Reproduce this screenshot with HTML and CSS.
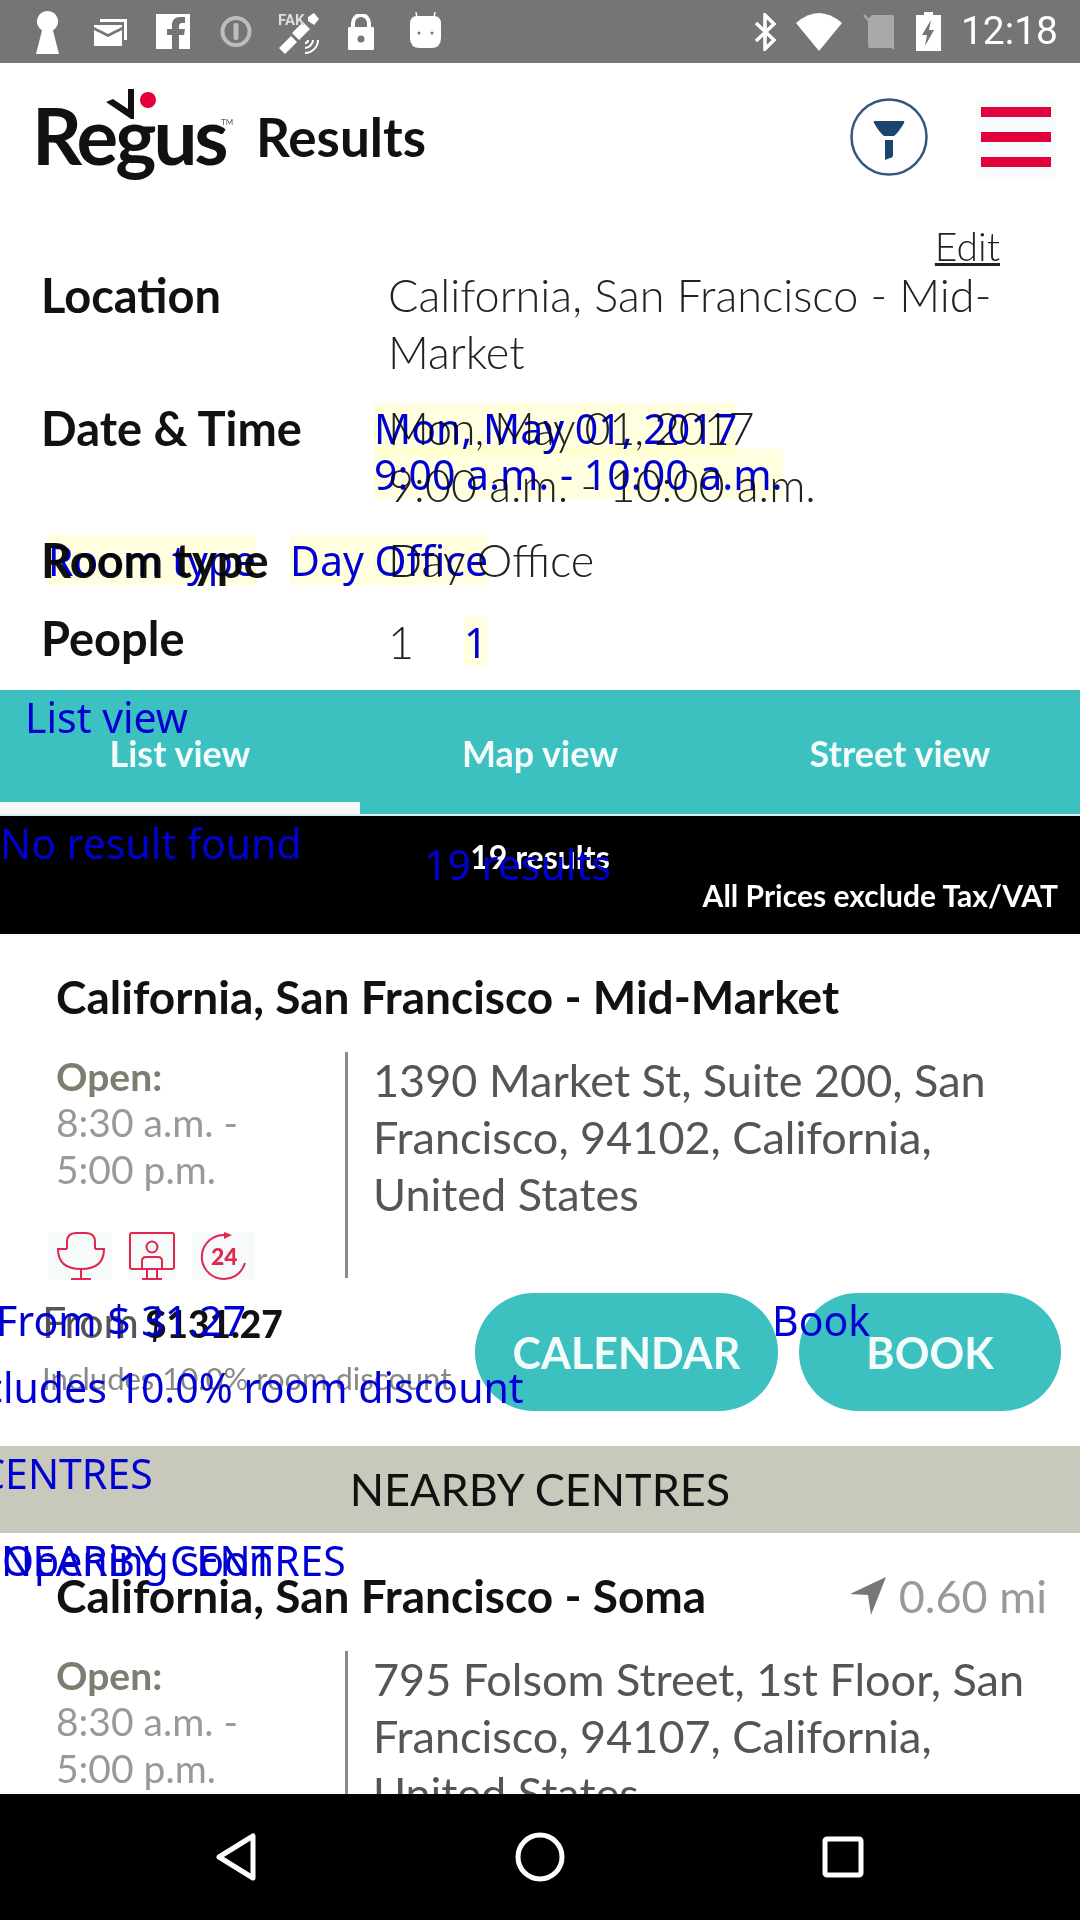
FILE: index.html
```html
<!DOCTYPE HTML>
<html>
<head>
<meta http-equiv="Content-Type" content="text/html; charset=utf-8">
<title>Results</title>
<link rel="stylesheet" href="styles.css">
</head>

<body>
<div class="screen">
	<div class="status">
		<svg class="s-key" viewBox="0 0 23 43"><path d="M11.500 0a10.500 10.500 0 0 1 5.500 19.500L23 43H0l6-23.500A10.500 10.500 0 0 1 11.500 0z" fill="#fff"/></svg>
		<svg class="s-mail" viewBox="0 0 33 27"><path d="M6 0h27v21h-3V3H6z" fill="#fff"/><path d="M0 6h28v2L14 15 0 8zM0 11l14 7 14-7v16H0z" fill="#fff"/></svg>
		<svg class="s-fb" viewBox="0 0 34 35"><path d="M0 0h34v35H23V21h5l1-6h-6v-3c0-2 1-3 3-3h3V3h-5c-5 0-8 3-8 8v4h-5v6h5v14H0z" fill="#fff"/></svg>
		<svg class="s-info" viewBox="0 0 32 33"><circle cx="16" cy="16.500" r="13.500" fill="none" stroke="#bdbdbd" stroke-width="4"/><rect x="13.500" y="8" width="5" height="17" rx="2" fill="#bdbdbd"/></svg>
		<svg class="s-sat" viewBox="0 0 43 43"><path d="M1 36 13 24l6 6-12 12zM30 5l6-4 5 6-5 6-6-4zM14 21 25 10l7 7-11 11z" fill="#fff"/><path d="M27 41c7 0 13-6 13-13M27 36c4 0 8-4 8-8M27 31c2 0 3-1 3-3" fill="none" stroke="#fff" stroke-width="2"/><text x="0" y="13" class="s-fake">FAK</text></svg>
		<svg class="s-lock" viewBox="0 0 26 36"><path d="M5 14V9a8 8 0 0 1 16 0v5" fill="none" stroke="#fff" stroke-width="4"/><path d="M1 13h24q1 0 1 1v21q0 1-1 1H1q-1 0-1-1V14q0-1 1-1z" fill="#fff"/><circle cx="13" cy="25" r="3.500" fill="#757575"/></svg>
		<svg class="s-droid" viewBox="0 0 31 37"><path d="M7 7 6 1M24 7l1-6" stroke="#fff" stroke-width="1.500"/><path d="M7 5h17q7 0 7 8v14q0 10-10 10H10Q0 37 0 27V13q0-8 7-8z" fill="#fff"/><circle cx="9" cy="22" r="1.500" fill="#757575"/><circle cx="22" cy="22" r="1.500" fill="#757575"/></svg>
		<div class="status-gap"></div>
		<svg class="s-bt" viewBox="0 0 23 38"><path d="M2 10 20 27 11 36V2l9 9L2 28" fill="none" stroke="#fff" stroke-width="3.500"/></svg>
		<svg class="s-wifi" viewBox="0 0 46 38"><path d="M0 10Q23-10 46 10L23 38z" fill="#fff"/></svg>
		<svg class="s-sim" viewBox="0 0 34 37"><path d="M10 2h20q2 0 2 2v31H8q-2 0-2-2V6z" fill="#a9a9a9"/><path d="M2 2 32 36" stroke="#a9a9a9" stroke-width="2.500"/></svg>
		<svg class="s-bat" viewBox="0 0 25 39"><path d="M8 0h9v3h8v36H0V3h8z" fill="#fff"/><path d="M15 8 6 23h5l-2 11 9-16h-5z" fill="#757575"/></svg>
		<span class="time">12:18</span>
	</div>

	<div class="content">
		<div class="head">
			<div class="logo">
				<svg class="logo-mark" viewBox="0 0 50 32"><path d="M22 0h6v30h-3L0 13l7-3 15 10z" fill="#111"/><circle cx="42" cy="11" r="8" fill="#e4003a"/></svg>
				<span class="logo-text">Regus</span><span class="logo-tm">TM</span>
			</div>
			<div class="head-title">Results</div>
			<svg class="filter" viewBox="0 0 78 80"><circle cx="39" cy="40" r="37.500" fill="#fff" stroke="#34567c" stroke-width="2.500"/><path d="M25 24h28q2 0 1 2-5 9-10 13H34q-5-4-10-13-1-2 1-2zM35 43h8v15q0 3-3 3l-5 2z" fill="#1b4470"/></svg>
			<div class="menu"><i></i><i></i><i></i></div>
		</div>

		<div class="edit-row"><a class="edit">Edit</a></div>

		<div class="detail d-loc">
			<div class="d-label">Location</div>
			<div class="d-value">California, San Francisco - Mid-<br>Market</div>
		</div>
		<div class="detail d-date">
			<div class="d-label">Date &amp; Time</div>
			<div class="d-value"><span class="d-tight">Mon, May 01, 2017</span><br>9:00 a.m. - 10:00 a.m.</div>
		</div>
		<div class="detail d-room">
			<div class="d-label">Room type</div>
			<div class="d-value">Day Office</div>
		</div>
		<div class="detail d-people">
			<div class="d-label">People</div>
			<div class="d-value d-num">1</div>
		</div>

		<div class="tabs">
			<div class="tab tab-on">List view</div>
			<div class="tab">Map view</div>
			<div class="tab">Street view</div>
		</div>

		<div class="summary">
			<div class="sum-count">19 results</div>
			<div class="sum-tax">All Prices exclude Tax/VAT</div>
		</div>

		<div class="card">
			<div class="card-top"><div class="card-title">California, San Francisco - Mid-Market</div></div>
			<div class="card-body">
				<div class="hours">
					<div class="open">Open:</div>
					<div class="times">8:30 a.m. -<br>5:00 p.m.</div>
					<div class="amen">
						<svg class="am am-chair" viewBox="0 0 64 48"><g fill="none" stroke="#e4254f" stroke-width="2"><path d="M19 17V10Q19 1 28 1H38Q47 1 47 10V17"/><path d="M19 17H10Q10 37 33 37Q56 37 56 17H47M33 37V47M23 47H43"/></g></svg>
						<svg class="am am-user" viewBox="0 0 48 48"><g fill="none" stroke="#e4254f" stroke-width="2"><rect x="2" y="1" width="44" height="36" rx="2"/><circle cx="24" cy="15" r="5.500"/><path d="M14 37V29q0-4 4-4h12q4 0 4 4v8M19 37v9M29 37v9M14 47h20"/></g></svg>
						<svg class="am am-24" viewBox="0 0 63 48"><path d="M33 3A22 22 0 1 0 53 31" fill="none" stroke="#e4254f" stroke-width="2"/><path d="M32 0l8 3-8 4z" fill="#e4254f"/><text x="19" y="33" class="am-text">24</text></svg>
					</div>
				</div>
				<div class="addr">1390 Market St, Suite 200, San Francisco, 94102, California, United States</div>
			</div>
			<div class="price-row">
				<div class="price">
					<div class="price-line"><span class="from">From</span> <b class="amount">$131.27</b></div>
					<div class="includes">Includes 10.0% room discount</div>
				</div>
				<a class="btn btn-cal">CALENDAR</a>
				<a class="btn btn-book">BOOK</a>
			</div>
		</div>

		<div class="nearby">NEARBY CENTRES</div>

		<div class="card">
			<div class="card-top">
				<div class="card-title">California, San Francisco - Soma</div>
				<div class="dist">
					<svg class="dist-arrow" viewBox="0 0 36 38"><path d="M36 0 21 38l-3-20L0 17z" fill="#777"/></svg>
					<span>0.60 mi</span>
				</div>
			</div>
			<div class="card-body">
				<div class="hours">
					<div class="open">Open:</div>
					<div class="times">8:30 a.m. -<br>5:00 p.m.</div>
				</div>
				<div class="addr">795 Folsom Street, 1st Floor, San Francisco, 94107, California, United States</div>
			</div>
		</div>

		<!-- second layer of labels sitting on top of the page -->
		<div class="over o-list">List view</div>
		<div class="over o-none">No result found</div>
		<div class="over o-count">19 results</div>
		<div class="over o-date hl">Mon, May 01, 2017</div>
		<div class="over o-time hl">9:00 a.m. - 10:00 a.m.</div>
		<div class="over o-room hl">Room type</div>
		<div class="over o-day hl">Day Office</div>
		<div class="over o-one hl">1</div>
		<div class="over o-from">From $ 31.27</div>
		<div class="over o-book">Book</div>
		<div class="over o-disc">Includes 10.0% room discount</div>
		<div class="over o-cent">NEARBY CENTRES</div>
		<div class="over o-near">NEARBY CENTRES</div>
		<div class="over o-soon">Opening soon</div>
	</div>

	<div class="nav">
		<svg class="nav-ic" viewBox="0 0 60 60"><path d="M46 9v42L12 30z" fill="none" stroke="#fff" stroke-width="5" stroke-linejoin="round"/></svg>
		<svg class="nav-ic" viewBox="0 0 60 60"><circle cx="30" cy="30" r="22" fill="none" stroke="#fff" stroke-width="5"/></svg>
		<svg class="nav-ic" viewBox="0 0 60 60"><rect x="12" y="12" width="36" height="36" rx="2" fill="none" stroke="#fff" stroke-width="5"/></svg>
	</div>
</div>
</body>
</html>
```

FILE: styles.css
```css
* {box-sizing: border-box;}
html, body {margin: 0; padding: 0; background: #fff;}
body {font-family: Lato, "Noto Sans", sans-serif; color: #111;}

.screen {width: 1080px; height: 1920px; display: flex; flex-direction: column; overflow: hidden;}

/* status bar */
.status {height: 63px; flex: none; background: #757575; display: flex; align-items: center; padding-left: 36px;}
.status svg {flex: none; display: block;}
.s-key {width: 23px; height: 43px; margin-right: 35px; margin-top: 2px;}
.s-mail {width: 33px; height: 27px; margin-right: 29px; margin-top: 2px;}
.s-fb {width: 34px; height: 35px; margin-right: 30px;}
.s-info {width: 32px; height: 33px; margin-right: 26px;}
.s-sat {width: 43px; height: 43px; margin-right: 27px; margin-top: 4px;}
.s-lock {width: 26px; height: 36px; margin-right: 36px;}
.s-droid {width: 31px; height: 37px; margin-top: -4px;}
.s-fake {font: bold 15px Roboto, sans-serif; fill: #ddd;}
.status-gap {flex: 1;}
.s-bt {width: 23px; height: 38px; margin-right: 19px;}
.s-wifi {width: 46px; height: 38px; margin-right: 20px;}
.s-sim {width: 34px; height: 37px; margin-right: 20px;}
.s-bat {width: 25px; height: 39px; margin-right: 20px;}
.time {font: 400 39px Roboto, sans-serif; color: #fff; margin-right: 22px; line-height: 63px;}

.content {flex: 1; min-height: 0; overflow: hidden; position: relative; background: #fff;}

/* head */
.head {height: 147px; display: flex; align-items: center; padding-left: 36px;}
.logo {width: 220px; height: 100px; position: relative; flex: none;}
.logo-mark {position: absolute; left: 70px; top: 2px; width: 50px; height: 32px;}
.logo-text {position: absolute; left: -4px; top: 8px; font-size: 78px; font-weight: 700; line-height: 80px; letter-spacing: -3px; color: #111;}
.logo-tm {position: absolute; left: 185px; top: 30px; font-size: 8px; color: #555;}
.head-title {font-size: 53px; font-weight: 700; flex: 1;}
.filter {width: 78px; height: 80px; margin-right: 48px; flex: none;}
.menu {width: 80px; height: 80px; margin-right: 24px; flex: none; background: #f7fbfb; display: flex; flex-direction: column; justify-content: center; gap: 15px; padding: 0 5px;}
.menu i {display: block; height: 10px; background: #e4003a;}

/* details */
.edit-row {height: 57px; padding: 16px 80px 0 0; text-align: right;}
.edit {font-size: 39px; font-weight: 300; line-height: 40px; text-decoration: underline; color: #222;}
.detail {display: flex; padding-left: 41px;}
.d-label {width: 347px; font-size: 47px; font-weight: 700; line-height: 57px; flex: none;}
.d-value {font-size: 45px; font-weight: 300; line-height: 57px; color: #222;}
.d-tight {letter-spacing: -1.200px;}
.d-loc {height: 133px;}
.d-date {height: 132px;}
.d-room {height: 78px;}
.d-people {height: 80px;}
.d-num {padding-top: 4px;}

/* tabs */
.tabs {display: flex; height: 126px; background: #3cc0c0; border-bottom: 2px solid #d9efef;}
.tab {flex: 1; text-align: center; font-size: 36px; font-weight: 700; color: #f4fbfb; padding-top: 43px; line-height: 40px;}
.tab-on {border-bottom: 12px solid #f6f8f8;}

.summary {height: 118px; background: #000; color: #fff; padding: 24px 22px 0 0; font-weight: 700;}
.sum-count {text-align: center; font-size: 32px; line-height: 34px; padding-left: 22px;}
.sum-tax {text-align: right; font-size: 30px; line-height: 34px; margin-top: 4px;}

/* cards */
.card {padding-top: 38px;}
.card-top {display: flex; justify-content: space-between; padding: 0 33px 0 56px; height: 50px;}
.card-title {font-size: 46px; font-weight: 700; line-height: 50px; color: #111;}
.dist {display: flex; align-items: center; font-size: 45px; color: #999; gap: 13px;}
.dist-arrow {width: 36px; height: 38px;}
.card-body {display: flex; margin: 30px 0 0 56px; height: 226px;}
.hours {flex: none; border-right: 3px solid #8a8a8a; width: 292px;}
.open {font-size: 39px; font-weight: 700; line-height: 46px; color: #7d7d70; margin-top: 1px;}
.times {font-size: 39px; line-height: 47px; color: #999;}
.amen {display: flex; margin: 39px 0 0 -8px; gap: 16px;}
.am {height: 48px; flex: none; background: #f6fafa;}
.am-chair {width: 64px;}
.am-user {width: 48px;}
.am-24 {width: 63px;}
.am-text {font: 900 23px Lato, sans-serif; fill: #e4254f;}
.addr {font-size: 45px; line-height: 57px; color: #555; padding-left: 25px; width: 700px;}

.price-row {display: flex; margin-top: 15px; height: 118px; padding-right: 19px;}
.price {flex: 1; padding-left: 42px;}
.price-line {line-height: 46px; height: 56px; padding-top: 6px; white-space: nowrap;}
.from {font-size: 43px; color: #555;}
.amount {font-size: 37px; font-weight: 900; color: #111; margin-left: 2px;}
.includes {font-size: 31px; color: #888; line-height: 30px; margin-top: 14px; white-space: nowrap;}
.btn {height: 118px; border-radius: 59px; background: #3cc0c0; color: #f4fbfb; font-size: 43px; font-weight: 700; display: flex; align-items: center; justify-content: center;}
.btn-cal {width: 303px; margin-right: 21px;}
.btn-book {width: 262px;}

.nearby {margin-top: 35px; height: 87px; background: #c9c8bc; font-size: 45px; line-height: 87px; text-align: center; color: #111;}

/* overlaid labels */
.over {position: absolute; font-family: "Noto Sans", sans-serif; font-size: 41px; line-height: 50px; color: #0000d2; white-space: nowrap;}
.hl {background: #ffffe0; mix-blend-mode: multiply;}
.o-list {left: 25px; top: 629px;}
.o-none {left: 0; top: 755px;}
.o-count {left: 424px; top: 776px;}
.o-date {left: 374px; top: 340px;}
.o-time {left: 374px; top: 386px;}
.o-room {left: 48px; top: 472px;}
.o-day {left: 290px; top: 472px;}
.o-one {left: 464px; top: 554px;}
.o-from {left: -4px; top: 1232px;}
.o-book {left: 772px; top: 1232px;}
.o-disc {left: -56px; top: 1299px;}
.o-cent {left: -187px; top: 1385px;}
.o-near {left: 1px; top: 1472px; letter-spacing: 0.400px;}
.o-soon {left: 2px; top: 1472px;}

/* nav bar */
.nav {height: 126px; flex: none; background: #000; display: flex; justify-content: center; gap: 243px; align-items: center;}
.nav-ic {width: 60px; height: 60px;}
```
